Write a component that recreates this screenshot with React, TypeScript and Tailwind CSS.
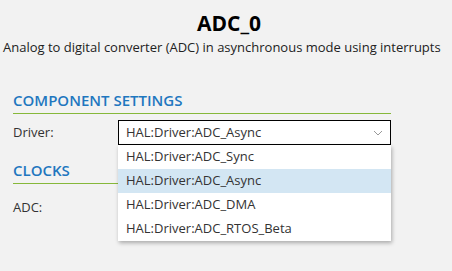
import React from 'react'

const options = [
  'HAL:Driver:ADC_Sync',
  'HAL:Driver:ADC_Async',
  'HAL:Driver:ADC_DMA',
  'HAL:Driver:ADC_RTOS_Beta',
]

const SectionHeading: React.FC<{ title: string }> = ({ title }) => (
  <div className="border-b border-[#86b83a] pb-[3px] text-[15px] font-semibold leading-[20px] text-[#1f77bf]">
    {title}
  </div>
)

const App: React.FC = () => {
  const selected = 'HAL:Driver:ADC_Async'

  return (
    <div
      className="h-[271px] w-[452px] overflow-hidden bg-[#f2f2f2] text-[#333]"
      style={{ fontFamily: '"Open Sans", sans-serif' }}
    >
      {/* Header */}
      <div className="pt-[9px]">
        <div className="pl-[6px] text-center text-[21px] font-bold leading-[28px] text-black">ADC_0</div>
        <div className="mt-[1px] pl-[3px] text-[13px] leading-[18px] text-[#222]">
          Analog to digital converter (ADC) in asynchronous mode using interrupts
        </div>
      </div>

      <div className="w-[391px] pl-[13px] pt-[34px]">
        <SectionHeading title="COMPONENT SETTINGS" />

        {/* Driver row */}
        <div className="mt-[6px] flex items-center">
          <div className="w-[105px] text-[13px]">Driver:</div>
          <div className="relative flex-1">
            <div className="flex h-[25px] items-center justify-between border border-black bg-white pl-[7px] pr-[6px] text-[13px]">
              <span>{selected}</span>
              <svg width="10" height="6" viewBox="0 0 10 6" fill="none" className="mr-[1px]">
                <path d="M1 1l4 4 4-4" stroke="#999" strokeWidth="1" />
              </svg>
            </div>

            {/* Open dropdown */}
            <div className="absolute left-0 right-0 top-[25px] z-10 bg-white shadow-[1px_2px_4px_rgba(0,0,0,0.3)]">
              {options.map((o) => (
                <div
                  key={o}
                  className={`flex h-[24px] items-center pl-[8px] text-[13px] ${
                    o === selected ? 'bg-[#d3e6f3]' : ''
                  }`}
                >
                  {o}
                </div>
              ))}
            </div>
          </div>
        </div>

        <div className="mt-[15px]">
          <SectionHeading title="CLOCKS" />
        </div>

        <div className="mt-[14px] text-[13px]">ADC:</div>
      </div>
    </div>
  )
}

export default App
